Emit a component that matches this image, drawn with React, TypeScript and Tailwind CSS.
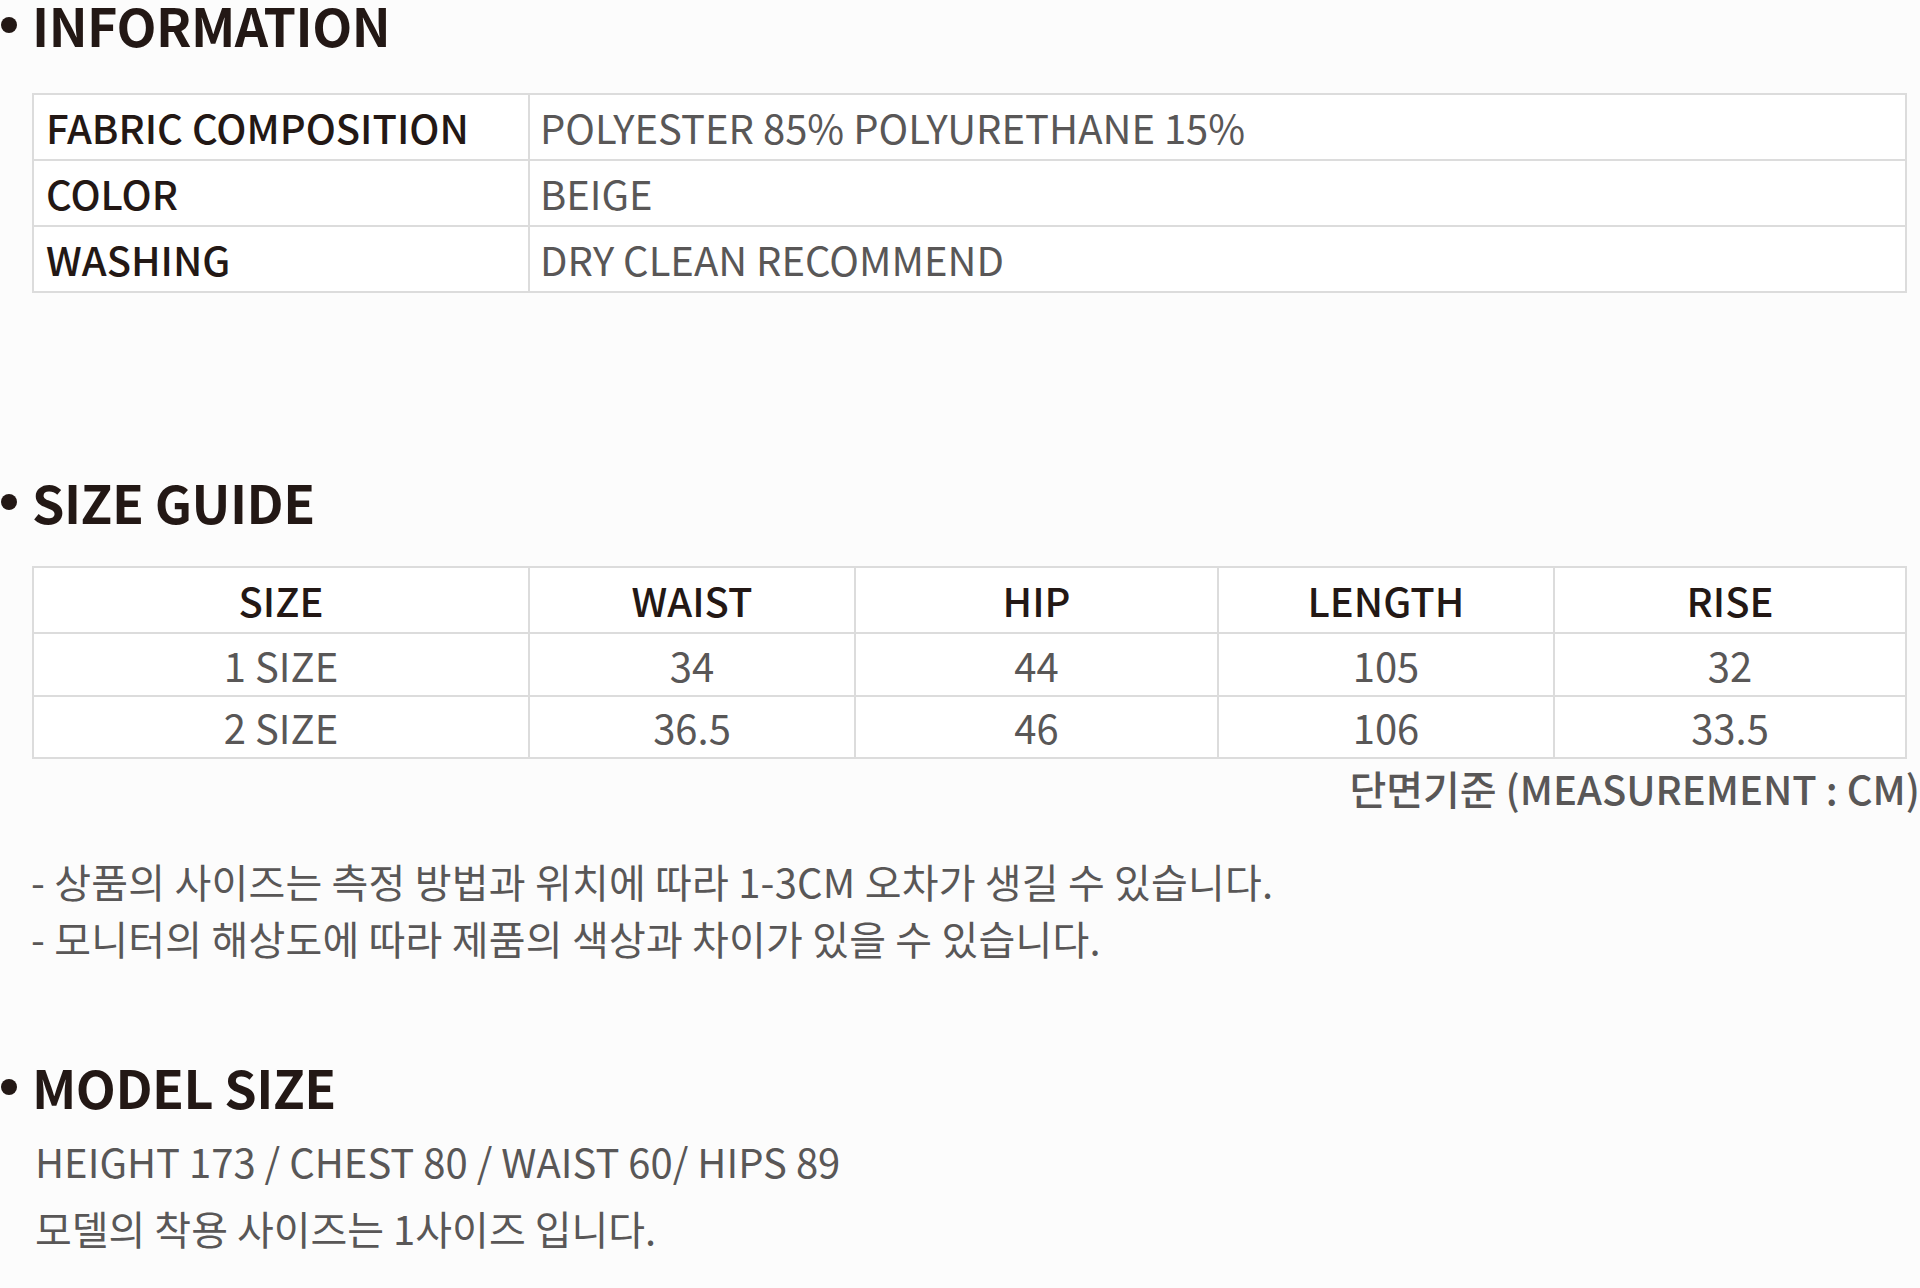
const infoRows = [
  { label: "FABRIC COMPOSITION", value: "POLYESTER 85% POLYURETHANE 15%" },
  { label: "COLOR", value: "BEIGE" },
  { label: "WASHING", value: "DRY CLEAN RECOMMEND" },
];

const sizeHead = ["SIZE", "WAIST", "HIP", "LENGTH", "RISE"];
const sizeRows = [
  ["1 SIZE", "34", "44", "105", "32"],
  ["2 SIZE", "36.5", "46", "106", "33.5"],
];

function Heading({ title, className }: { title: string; className?: string }) {
  return (
    <div className={"flex items-center h-[46px] " + (className ?? "")}>
      <span className="block w-[16px] h-[16px] rounded-full bg-[#231815] ml-[1px]"></span>
      <span className="ml-[15px] text-[52px] leading-[46px] font-bold text-[#231815] tracking-[-0.5px]">{title}</span>
    </div>
  );
}

function InfoTable() {
  return (
    <div className="ml-[32px] w-[1875px] border-2 border-[#dcdcdc] bg-white">
      {infoRows.map((row, i) => (
        <div
          key={row.label}
          className={"grid grid-cols-[496px_1fr] h-[64px] " + (i < infoRows.length - 1 ? "box-content border-b-2 border-[#dcdcdc]" : "")}
        >
          <div className="flex items-center pl-[12px] border-r-2 border-[#dcdcdc] text-[40px] font-medium text-[#231815]">
            {row.label}
          </div>
          <div className="flex items-center pl-[10px] text-[40px] text-[#595757]">{row.value}</div>
        </div>
      ))}
    </div>
  );
}

function SizeTable() {
  const cols = "grid grid-cols-[496px_326px_363px_336px_1fr]";
  return (
    <div className="ml-[32px] w-[1875px] border-2 border-[#dcdcdc] bg-white">
      <div className={cols + " h-[64px] box-content border-b-2 border-[#dcdcdc]"}>
        {sizeHead.map((h, i) => (
          <div
            key={h}
            className={"flex items-center justify-center text-[40px] font-medium text-[#231815] " + (i < 4 ? "border-r-2 border-[#dcdcdc]" : "")}
          >
            {h}
          </div>
        ))}
      </div>
      {sizeRows.map((row, r) => (
        <div
          key={r}
          className={cols + (r === 0 ? " h-[61px] box-content border-b-2 border-[#dcdcdc]" : " h-[60px]")}
        >
          {row.map((c, i) => (
            <div
              key={i}
              className={"flex items-center justify-center text-[40px] text-[#595757] " + (i < 4 ? "border-r-2 border-[#dcdcdc]" : "")}
            >
              {c}
            </div>
          ))}
        </div>
      ))}
    </div>
  );
}

export default function App() {
  return (
    <div className="w-[1920px] h-[1288px] overflow-hidden bg-[#fcfcfc] font-['Noto_Sans_CJK_KR',sans-serif]">
      <Heading title="INFORMATION" className="pt-[2px] box-content" />
      <div className="mt-[45px]">
        <InfoTable />
      </div>

      <Heading title="SIZE GUIDE" className="mt-[186px]" />
      <div className="mt-[41px]">
        <SizeTable />
      </div>
      <div className="mt-[9px] w-[1920px] flex justify-end">
        <span className="text-[40px] leading-[40px] font-medium text-[#595757]">단면기준 (MEASUREMENT : CM)</span>
      </div>

      <div className="mt-[45px] pl-[31px] text-[40px] leading-[57px] tracking-[0.2px] text-[#595757]">
        <p>- 상품의 사이즈는 측정 방법과 위치에 따라 1-3CM 오차가 생길 수 있습니다.</p>
        <p>- 모니터의 해상도에 따라 제품의 색상과 차이가 있을 수 있습니다.</p>
      </div>

      <Heading title="MODEL SIZE" className="mt-[97px]" />
      <div className="mt-[18px] pl-[35px] text-[40px] leading-[67px] text-[#595757]">
        <p>HEIGHT 173 / CHEST 80 / WAIST 60/ HIPS 89</p>
        <p>모델의 착용 사이즈는 1사이즈 입니다.</p>
      </div>
    </div>
  );
}
